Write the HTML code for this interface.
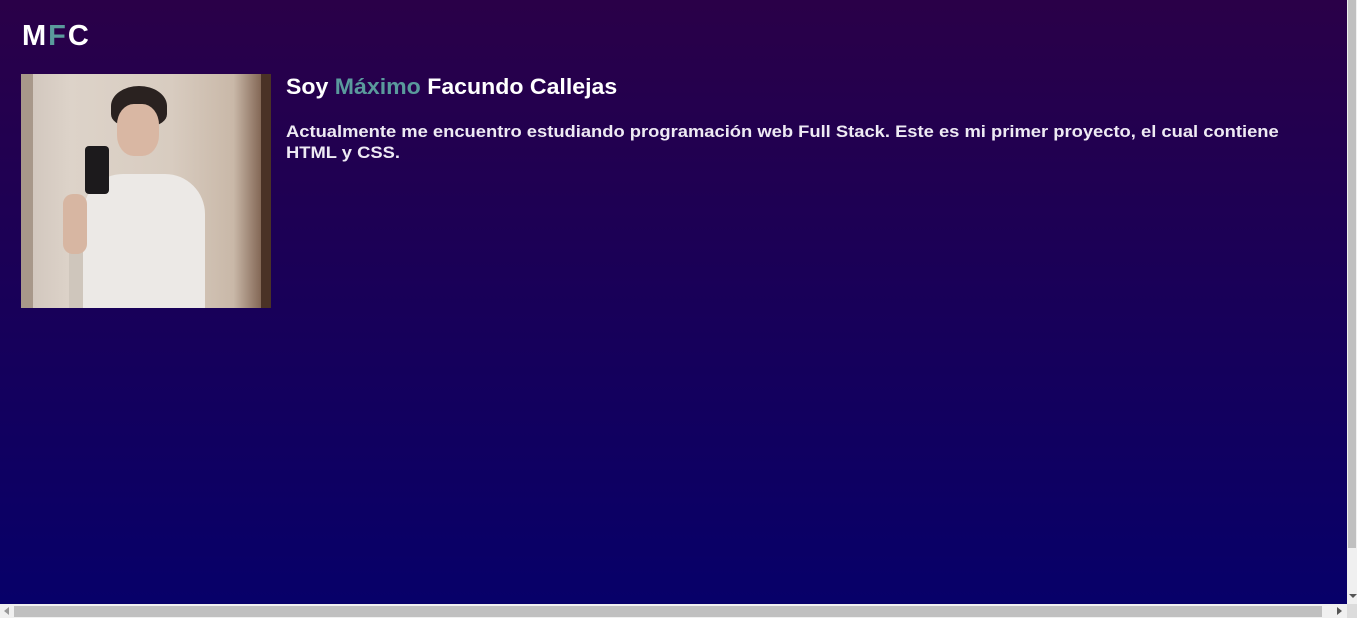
<!DOCTYPE html>
<html><head><meta charset="utf-8"><style>
html,body{margin:0;padding:0;}
body{width:1357px;height:618px;overflow:hidden;position:relative;font-family:"Liberation Sans",sans-serif;background:linear-gradient(#2a0048,#06006a);}
.t{position:absolute;white-space:nowrap;font-weight:bold;color:#fff;transform-origin:0 0;}
.c{color:#5a9a9c;}
.photo{position:absolute;left:21px;top:74px;width:250px;height:234px;overflow:hidden;background:linear-gradient(90deg,#cfc4bb 0%,#ddd3c9 20%,#d8ccc0 60%,#c9b8a8 85%,#6a4a38 100%);}
.photo div{position:absolute;}
</style></head><body>
<div class="t" style="left:22px;top:20px;font-size:29px;letter-spacing:2px;">M<span class="c">F</span>C</div>
<div class="photo">
 <div style="left:0;top:0;width:12px;height:234px;background:#a8988a"></div>
 <div style="left:240px;top:0;width:10px;height:234px;background:#4a3226"></div>
 <div style="left:48px;top:160px;width:18px;height:74px;background:#cfc6bc"></div>
 <div style="left:90px;top:12px;width:56px;height:40px;border-radius:50% 50% 30% 30%;background:#2a2220"></div>
 <div style="left:96px;top:30px;width:42px;height:52px;border-radius:40%;background:#d9b7a3"></div>
 <div style="left:62px;top:100px;width:122px;height:134px;border-radius:40px 40px 0 0;background:#ece9e6"></div>
 <div style="left:42px;top:120px;width:24px;height:60px;border-radius:10px;background:#d7b6a2"></div>
 <div style="left:64px;top:72px;width:24px;height:48px;border-radius:4px;background:#1c1a1c"></div>
</div>
<div class="t" style="left:286px;top:74px;font-size:22px;transform:scaleX(1.05)">Soy <span class="c">Máximo</span> Facundo Callejas</div>
<div class="t" style="left:286px;top:122px;font-size:17px;color:#eeeaf4;transform:scaleX(1.08)">Actualmente me encuentro estudiando programación web Full Stack. Este es mi primer proyecto, el cual contiene</div>
<div class="t" style="left:286px;top:143px;font-size:17px;color:#eeeaf4;transform:scaleX(1.08)">HTML y CSS.</div>
<div style="position:absolute;left:1347px;top:0;width:10px;height:604px;background:#f0f0f0"></div>
<div style="position:absolute;left:1348px;top:0;width:8px;height:548px;background:#c0c0c0"></div>
<div style="position:absolute;left:0;top:604px;width:1357px;height:14px;background:#f0f0f0"></div>
<div style="position:absolute;left:14px;top:606px;width:1308px;height:11px;background:#c0c0c0"></div>
<div style="position:absolute;left:1347px;top:604px;width:10px;height:14px;background:#dcdcdc"></div>
<div style="position:absolute;left:1337px;top:607px;width:0;height:0;border-left:5px solid #555;border-top:4px solid transparent;border-bottom:4px solid transparent"></div>
<div style="position:absolute;left:4px;top:607px;width:0;height:0;border-right:5px solid #999;border-top:4px solid transparent;border-bottom:4px solid transparent"></div>
<div style="position:absolute;left:1349px;top:594px;width:0;height:0;border-top:4px solid #555;border-left:4px solid transparent;border-right:4px solid transparent"></div>
</body></html>
